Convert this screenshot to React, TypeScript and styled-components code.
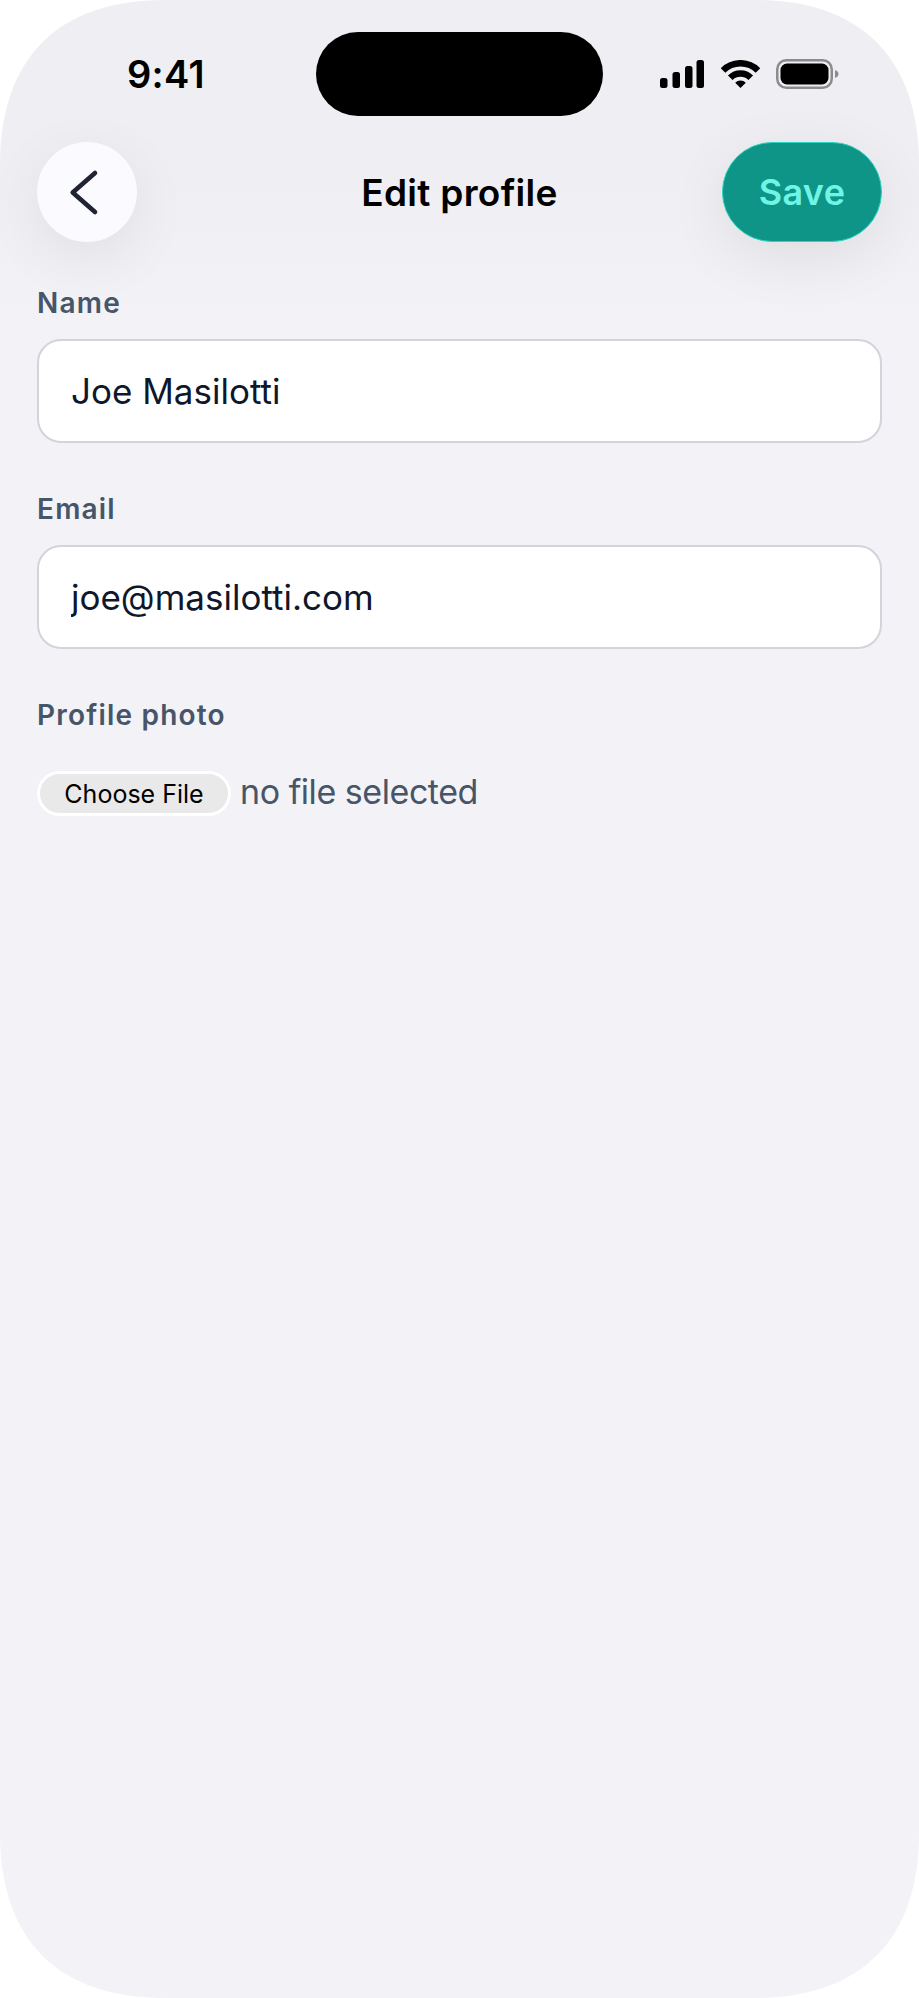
import styled, { createGlobalStyle } from "styled-components";

const GlobalStyle = createGlobalStyle`
  html, body {
    margin: 0;
    padding: 0;
    background: #fff;
  }
  * {
    box-sizing: border-box;
  }
`;

const Phone = styled.div`
  width: 919px;
  height: 1998px;
  overflow: hidden;
  clip-path: path("M0 165C0 58 58 0 165 0H754C861 0 919 58 919 165V1833C919 1940 861 1998 754 1998H165C58 1998 0 1940 0 1833Z");
  background: linear-gradient(#eeeef3 0, #eeeef3 170px, #f2f2f7 340px);
  font-family: Inter, "Liberation Sans", sans-serif;
`;

const StatusBar = styled.div`
  display: grid;
  grid-template-columns: 1fr 287px 1fr;
  align-items: center;
  padding-top: 32px;
`;

const Time = styled.div`
  padding-left: 127px;
  font-size: 38px;
  font-weight: 600;
  letter-spacing: 0.3px;
  color: #000;
`;

const Island = styled.div`
  height: 84px;
  border-radius: 42px;
  background: #000;
`;

const StatusIcons = styled.div`
  display: flex;
  align-items: center;
  gap: 16.5px;
  padding-left: 57px;
`;

const Header = styled.header`
  display: grid;
  grid-template-columns: 1fr auto 1fr;
  align-items: center;
  margin-top: 26px;
  padding: 0 37px;
`;

const BackButton = styled.button`
  justify-self: start;
  display: flex;
  align-items: center;
  justify-content: center;
  width: 100px;
  height: 100px;
  padding: 0;
  border: none;
  border-radius: 50%;
  background: #fafaff;
  box-shadow: 0 16px 60px rgba(0, 0, 0, 0.07);
`;

const Title = styled.h1`
  margin: 0;
  font-size: 37px;
  font-weight: 600;
  letter-spacing: 0.3px;
  color: #000;
`;

const SaveButton = styled.button`
  justify-self: end;
  width: 160px;
  height: 100px;
  padding: 0;
  border: 1.5px solid #2dd4bf;
  border-radius: 50px;
  background: #0f9488;
  box-shadow: 0 16px 60px rgba(0, 0, 0, 0.08);
  font-family: inherit;
  font-size: 36px;
  font-weight: 600;
  letter-spacing: 0.3px;
  color: #6ff5e4;
`;

const Form = styled.form`
  display: flex;
  flex-direction: column;
  gap: 49px;
  margin-top: 44px;
  padding: 0 37px;
`;

const Field = styled.div`
  display: flex;
  flex-direction: column;
  gap: 19px;
`;

const Label = styled.label`
  font-size: 28px;
  font-weight: 600;
  line-height: 34px;
  letter-spacing: 1.2px;
  color: #475569;
`;

const TextInput = styled.input`
  width: 100%;
  height: 104px;
  padding: 0 32px;
  border: 2px solid #d1d5db;
  border-radius: 24px;
  background: #fff;
  font-family: inherit;
  font-size: 35px;
  color: #0f172a;
  outline: none;
`;

const FileRow = styled.div`
  display: flex;
  align-items: center;
  gap: 9px;
  margin-top: 20px;
`;

const FileButton = styled.button`
  width: 194px;
  height: 45px;
  padding: 0;
  border: 3px solid #fff;
  border-radius: 23px;
  background: #e9e9e9;
  font-family: inherit;
  font-size: 25px;
  color: #000;
`;

const FileName = styled.span`
  margin-bottom: 4px;
  font-size: 34px;
  letter-spacing: -0.45px;
  color: #475569;
`;

function SignalIcon() {
  return (
    <svg width="44" height="28" viewBox="0 0 44 28">
      <rect x="0" y="18" width="7.5" height="10" rx="2.5" fill="#000" />
      <rect x="12.5" y="12" width="7.5" height="16" rx="2.5" fill="#000" />
      <rect x="25" y="6" width="7.5" height="22" rx="2.5" fill="#000" />
      <rect x="36.5" y="0" width="7.5" height="28" rx="2.5" fill="#000" />
    </svg>
  );
}

function WifiIcon() {
  return (
    <svg width="39" height="28" viewBox="0 0 39 28" fill="none">
      <path d="M2 10.5A24.7 24.7 0 0 1 37 10.5" stroke="#000" strokeWidth="6.5" />
      <path d="M9.25 17.75A14.5 14.5 0 0 1 29.75 17.75" stroke="#000" strokeWidth="6.5" />
      <path d="M19.5 28L14.2 22.7A7.5 7.5 0 0 1 24.8 22.7Z" fill="#000" />
    </svg>
  );
}

function BatteryIcon() {
  return (
    <svg width="63" height="30" viewBox="0 0 63 30" fill="none">
      <rect x="1.25" y="1.25" width="54.5" height="27.5" rx="9" stroke="#8c8c8c" strokeWidth="2.5" />
      <rect x="4.5" y="4.5" width="48" height="21" rx="6.5" fill="#000" />
      <path d="M59 11C61 11.8 62.5 13 62.5 15C62.5 17 61 18.2 59 19Z" fill="#8c8c8c" />
    </svg>
  );
}

function App() {
  return (
    <Phone>
      <GlobalStyle />
      <StatusBar>
        <Time>9:41</Time>
        <Island />
        <StatusIcons>
          <SignalIcon />
          <WifiIcon />
          <BatteryIcon />
        </StatusIcons>
      </StatusBar>
      <Header>
        <BackButton type="button" aria-label="Back">
          <svg width="40" height="48" viewBox="0 0 40 48" fill="none">
            <path
              d="M28 5L5.7 24.5L28 44"
              stroke="#1f2430"
              strokeWidth="4.6"
              strokeLinecap="round"
              strokeLinejoin="round"
            />
          </svg>
        </BackButton>
        <Title>Edit profile</Title>
        <SaveButton type="button">Save</SaveButton>
      </Header>
      <Form>
        <Field>
          <Label htmlFor="name">Name</Label>
          <TextInput id="name" defaultValue="Joe Masilotti" />
        </Field>
        <Field>
          <Label htmlFor="email">Email</Label>
          <TextInput id="email" defaultValue="joe@masilotti.com" />
        </Field>
        <Field>
          <Label>Profile photo</Label>
          <FileRow>
            <FileButton type="button">Choose File</FileButton>
            <FileName>no file selected</FileName>
          </FileRow>
        </Field>
      </Form>
    </Phone>
  );
}

export default App;
